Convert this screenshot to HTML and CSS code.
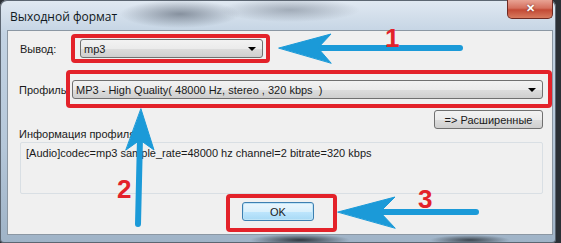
FILE: index.html
```html
<!DOCTYPE html>
<html lang="ru">
<head>
    <meta charset="UTF-8">
    <title>Выходной формат</title>
    <link rel="stylesheet" href="styles.css">
</head>
<body>

    <div class="window">
        <!-- Заголовок окна -->
        <div class="titlebar">
            <span class="title">Выходной формат</span>
            <div class="close-btn">✕</div>
        </div>

        <!-- Клиентская область -->
        <div class="client">
            <div class="row row-output">
                <label class="lbl lbl-output">Вывод:</label>
                <div class="combo combo-output">
                    <span>mp3</span>
                    <span class="combo-arrow"></span>
                </div>
            </div>

            <div class="row row-profile">
                <label class="lbl lbl-profile">Профиль:</label>
                <div class="combo combo-profile">
                    <span>MP3 - High Quality( 48000 Hz, stereo , 320 kbps&nbsp; )</span>
                    <span class="combo-arrow"></span>
                </div>
            </div>

            <div class="row row-advanced">
                <button class="btn btn-advanced">=&gt; Расширенные</button>
            </div>

            <div class="info-label">Информация профиля:</div>
            <div class="info-box">[Audio]codec=mp3 sample_rate=48000 hz channel=2 bitrate=320 kbps</div>

            <div class="row row-ok">
                <button class="btn btn-ok">OK</button>
            </div>
        </div>
    </div>

    <!-- Пометки поверх скриншота -->
    <svg class="marks" width="561" height="243" viewBox="0 0 561 243">
        <g fill="none" stroke="#e3222a" stroke-width="4">
            <rect x="73" y="36" width="195" height="25" rx="2"/>
            <rect x="68" y="72" width="482" height="34" rx="2"/>
            <rect x="228" y="196" width="107" height="34" rx="2"/>
        </g>

        <g fill="#1b9ad8" stroke="#1b9ad8" stroke-linecap="round">
            <!-- 1 -->
            <line x1="318" y1="48" x2="460" y2="48" stroke-width="6"/>
            <path d="M279 48 L331 34 L318 48 L331 63 Z" stroke-width="1" stroke-linejoin="round"/>
            <!-- 2 -->
            <line x1="140" y1="138" x2="138" y2="224" stroke-width="6"/>
            <path d="M141 109 L154 150 L140 140 L126 150 Z" stroke-width="1" stroke-linejoin="round"/>
            <!-- 3 -->
            <line x1="380" y1="212" x2="476" y2="212" stroke-width="6"/>
            <path d="M338 212 L395 197 L380 212 L395 228 Z" stroke-width="1" stroke-linejoin="round"/>
        </g>

        <g class="num" fill="#e3222a">
            <text x="385" y="47">1</text>
            <text x="117" y="198">2</text>
            <text x="418" y="208">3</text>
        </g>
    </svg>

</body>
</html>
```

FILE: styles.css
```css
body {
    margin: 0;
    padding: 0;
    width: 561px;
    height: 243px;
    overflow: hidden;
    background-color: #2b3036;
    font-family: "Liberation Sans", Arial, sans-serif;
    font-size: 11px;
    color: #1a1a1a;
}

.window {
    position: relative;
    width: 556px;
    height: 243px;
    border-radius: 7px 7px 4px 4px;
    background:
        radial-gradient(ellipse 60px 14px at 180px 14px, rgba(70, 80, 95, 0.55), transparent),
        radial-gradient(ellipse 70px 12px at 290px 10px, rgba(60, 70, 85, 0.35), transparent),
        radial-gradient(ellipse 50px 6px at 300px 240px, rgba(20, 25, 30, 0.8), transparent),
        radial-gradient(ellipse 40px 5px at 470px 240px, rgba(20, 25, 30, 0.7), transparent),
        linear-gradient(to bottom, #e1e9f2 0%, #c3d3e3 14%, #b5c7d9 60%, #9fb3c7 100%);
    box-shadow: inset 0 0 0 1px #5c6672;
}

.titlebar {
    display: flex;
    justify-content: space-between;
    align-items: flex-start;
    height: 30px;
}

.title {
    margin: 8px 0 0 10px;
    font-family: "Open Sans", "Liberation Sans", sans-serif;
    font-size: 12px;
    color: #101820;
}

.close-btn {
    width: 44px;
    height: 18px;
    margin-right: 3px;
    border: 1px solid #6e2a22;
    border-top: none;
    border-radius: 0 0 5px 5px;
    background: linear-gradient(to bottom, #e8a394 0%, #d5705e 45%, #c34a35 55%, #d77a5e 100%);
    color: #ffffff;
    font-size: 11px;
    font-weight: bold;
    text-align: center;
    line-height: 17px;
    text-shadow: 0 0 2px #6e2a22;
}

.client {
    width: 544px;
    height: 203px;
    margin-left: 7px;
    border: 1px solid #8b97a3;
    background-color: #f0f0f0;
    box-sizing: content-box;
}

.row {
    display: flex;
    align-items: center;
}

.lbl {
    padding-left: 12px;
}

.row-output {
    margin-top: 8px;
}

.lbl-output {
    width: 60px;
}

.row-profile {
    margin-top: 22px;
}

.lbl-profile {
    width: 53px;
    padding-left: 11px;
}

.combo {
    display: flex;
    justify-content: space-between;
    align-items: center;
    height: 19px;
    padding: 0 6px 0 3px;
    border: 1px solid #707070;
    border-radius: 3px;
    background: linear-gradient(to bottom, #f2f2f2 0%, #ebebeb 50%, #dddddd 51%, #cfcfcf 100%);
    box-sizing: border-box;
}

.combo-output {
    width: 183px;
}

.combo-profile {
    width: 471px;
}

.combo-arrow {
    width: 0;
    height: 0;
    border-left: 4px solid transparent;
    border-right: 4px solid transparent;
    border-top: 4px solid #000000;
}

.btn {
    height: 19px;
    padding: 0;
    border: 1px solid #707070;
    border-radius: 3px;
    background: linear-gradient(to bottom, #f2f2f2 0%, #ebebeb 50%, #dddddd 51%, #cfcfcf 100%);
    font-family: "Liberation Sans", Arial, sans-serif;
    font-size: 11px;
    color: #1a1a1a;
}

.row-advanced {
    justify-content: flex-end;
    margin: 11px 9px 0 0;
}

.btn-advanced {
    width: 109px;
}

.info-label {
    margin-top: -2px;
    padding-left: 11px;
    line-height: 14px;
}

.info-box {
    width: 523px;
    height: 52px;
    margin: 1px 0 0 12px;
    padding: 4px 5px;
    border: 1px solid #d9dfe4;
    border-radius: 2px;
    background-color: #f0f0f0;
    box-sizing: border-box;
}

.row-ok {
    justify-content: center;
    margin-top: 8px;
    padding-right: 4px;
}

.btn-ok {
    width: 72px;
    border-color: #3c7fb1;
    background: linear-gradient(to bottom, #eaf6fd 0%, #d9f0fc 50%, #bee6fd 51%, #a7d9f5 100%);
    box-shadow: inset 0 0 0 1px #bfe4f7;
}

.marks {
    position: absolute;
    top: 0;
    left: 0;
    pointer-events: none;
}

.num text {
    font-family: "Liberation Sans", Arial, sans-serif;
    font-size: 26px;
    font-weight: bold;
}
```
